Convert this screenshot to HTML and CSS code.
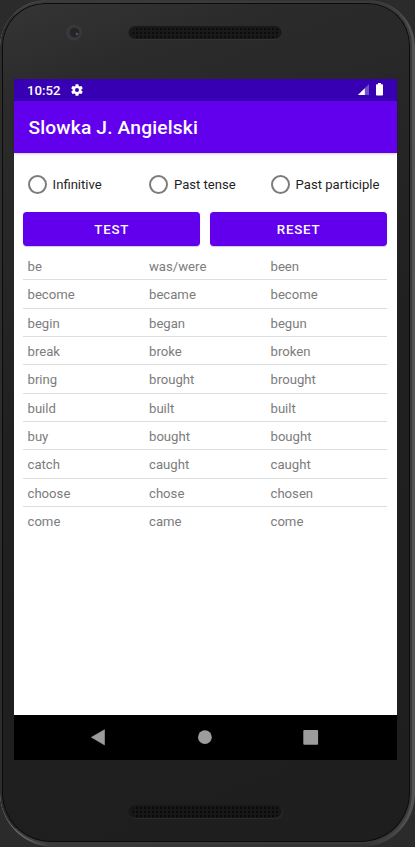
FILE: index.html
```html
<!DOCTYPE html>
<html lang="en">
<head>
<meta charset="utf-8">
<title>Slowka J. Angielski</title>
<link rel="stylesheet" href="styles.css">
</head>
<body>
<div class="phone">
<div class="face">
  <div class="bezel-top">
    <svg class="hardware" width="415" height="79" viewBox="0 0 415 79">
      <defs>
        <pattern id="mesh" x="131" y="27" width="4" height="4" patternUnits="userSpaceOnUse"><circle cx="2" cy="2" r="1" fill="#080808"/></pattern>
      </defs>
      <circle cx="74" cy="32.500" r="8" fill="#383838"/>
      <circle cx="74.500" cy="32.500" r="4.800" fill="#26242b"/>
      <circle cx="77" cy="34" r="1.200" fill="#684a58"/>
      <rect x="129" y="26.500" width="153.500" height="13" rx="6.500" fill="#3a3a3a"/>
      <rect x="128.500" y="26" width="153.500" height="13" rx="6.500" fill="#191919"/>
      <rect x="132" y="27" width="147" height="11" rx="5" fill="url(#mesh)"/>
    </svg>
  </div>
  <main class="screen">
    <div class="status">
      <span class="clock">10:52</span>
      <svg class="gear" width="14" height="14" viewBox="0 0 24 24"><path fill="#fff" fill-rule="evenodd" d="M19.430 12.980c.04-.32.07-.64.07-.98s-.03-.66-.07-.98l2.110-1.650c.19-.15.24-.42.12-.64l-2-3.460c-.12-.22-.39-.3-.61-.22l-2.490 1c-.52-.4-1.080-.73-1.690-.98l-.38-2.650A.488.488 0 0 0 14 2h-4c-.25 0-.46.18-.49.42l-.38 2.650c-.61.25-1.170.59-1.690.98l-2.490-1c-.23-.09-.49 0-.61.22l-2 3.460c-.13.22-.07.49.12.64l2.110 1.650c-.04.32-.07.65-.07.98s.03.66.07.98l-2.110 1.650c-.19.15-.24.42-.12.64l2 3.460c.12.22.39.3.61.22l2.490-1c.52.4 1.080.73 1.690.98l.38 2.650c.03.24.24.42.49.42h4c.25 0 .46-.18.49-.42l.38-2.650c.61-.25 1.170-.59 1.690-.98l2.490 1c.23.09.49 0 .61-.22l2-3.460c.12-.22.07-.49-.12-.64zM12 15.500a3.500 3.500 0 1 1 0-7 3.500 3.500 0 0 1 0 7z"/></svg>
      <svg class="signal" width="11" height="11" viewBox="0 0 11 11"><path fill="#7350c9" d="M0 11 11 0v11z"/><path fill="#fff" d="M0 11 6.800 4.200V11z"/></svg>
      <svg class="battery" width="7" height="13" viewBox="0 0 7 13"><path fill="#fff" d="M2 0h3v1.300h1.200q.8 0 .8.800v9.600q0 .8-.8.800H.8q-.8 0-.8-.8V2.100q0-.8.800-.8H2z"/></svg>
    </div>
    <header class="appbar">Slowka J. Angielski</header>
    <section class="content">
      <div class="radios">
        <label class="option"><i class="ring"></i>Infinitive</label>
        <label class="option"><i class="ring"></i>Past tense</label>
        <label class="option"><i class="ring"></i>Past participle</label>
      </div>
      <div class="actions"><button class="btn">TEST</button><button class="btn">RESET</button></div>
      <div class="verbs">
        <div class="row"><span>be</span><span>was/were</span><span>been</span></div>
        <div class="row"><span>become</span><span>became</span><span>become</span></div>
        <div class="row"><span>begin</span><span>began</span><span>begun</span></div>
        <div class="row"><span>break</span><span>broke</span><span>broken</span></div>
        <div class="row"><span>bring</span><span>brought</span><span>brought</span></div>
        <div class="row"><span>build</span><span>built</span><span>built</span></div>
        <div class="row"><span>buy</span><span>bought</span><span>bought</span></div>
        <div class="row"><span>catch</span><span>caught</span><span>caught</span></div>
        <div class="row"><span>choose</span><span>chose</span><span>chosen</span></div>
        <div class="row"><span>come</span><span>came</span><span>come</span></div>
      </div>
    </section>
    <nav class="navbar">
      <svg width="383" height="45" viewBox="0 0 383 45" fill="#9c9c9c">
        <path d="M77.400 22.300 90.500 14.700v15.200z" stroke="#9c9c9c" stroke-width=".6" stroke-linejoin="round"/>
        <circle cx="190.900" cy="22.200" r="6.900"/>
        <rect x="289.300" y="15" width="14.800" height="14.800" rx="1"/>
      </svg>
    </nav>
  </main>
  <div class="bezel-bottom">
    <svg class="hardware" width="415" height="87" viewBox="0 760 415 87">
      <defs>
        <pattern id="mesh2" x="131" y="806" width="4" height="4" patternUnits="userSpaceOnUse"><circle cx="2" cy="2" r="1" fill="#050505"/></pattern>
      </defs>
      <rect x="129" y="805.600" width="153.500" height="13" rx="6.500" fill="#363636"/>
      <rect x="128.500" y="805" width="153.500" height="13" rx="6.500" fill="#171717"/>
      <rect x="132" y="806" width="147" height="11" rx="5" fill="url(#mesh2)"/>
    </svg>
  </div>
</div>
<i class="side-key"></i>
</div>
</body>
</html>
```

FILE: styles.css
```css
* { box-sizing: border-box; }
body { margin: 0; background: #2b2b2b; font-family: Roboto, sans-serif; }
.phone {
  position: relative;
  width: 415px;
  height: 847px;
  padding: 1px 3px 2px 0;
  overflow: hidden;
  border-radius: 47px 47px 54px 54px;
  background: linear-gradient(90deg, #888 0, #3a3a3a 12%, #333 88%, #555 100%);
}
.face {
  height: 843px;
  border: 2px solid #3a3a3a;
  border-left-color: #2c2c2c;
  border-radius: 45px 44px 51px 51px;
  background: linear-gradient(160deg, #353535 0, #2b2b2b 10%, #202020 45%, #1e1e1e 100%);
  box-shadow: inset 0 0 0 1px #0b0b0b;
  padding-left: 12px;
}
.bezel-top { display: flow-root; height: 76px; }
.bezel-bottom { display: flow-root; height: 81px; }
.hardware { display: block; margin-left: -14px; margin-top: -3px; }
.bezel-bottom .hardware { margin-top: 0; }
.screen {
  display: flex;
  flex-direction: column;
  width: 383px;
  height: 681px;
  background: #fff;
}
.status {
  display: flex;
  align-items: center;
  height: 22px;
  padding: 0 14px 0 13px;
  background: #3700b3;
  color: #fff;
}
.clock { font-size: 13.200px; font-weight: 500; }
.gear { margin-left: 9.500px; }
.signal { margin-left: auto; margin-right: 7px; margin-top: -1px; }
.battery { margin-top: -1px; }
.appbar {
  height: 52px;
  padding-left: 14.500px;
  line-height: 54px;
  background: #6200ee;
  color: #fff;
  font-size: 19.200px;
  font-weight: 500;
  letter-spacing: .16px;
  box-shadow: 0 1px 2px #0003;
}
.content { flex: 1; padding: 8px 9px 0; }
.radios { display: grid; grid-template-columns: 121.400px 121.600px 1fr; height: 47px; }
.option {
  display: flex;
  align-items: center;
  gap: 5.600px;
  padding-left: 5px;
  color: #1f1f1f;
  font-size: 13.100px;
  white-space: nowrap;
}
.ring { flex: none; width: 19px; height: 19px; border: 2px solid #7c7c7c; border-radius: 50%; }
.actions { display: grid; grid-template-columns: 1fr 1fr; gap: 9.400px; height: 39px; padding-top: 4px; width: 364.300px; }
.btn {
  height: 34.300px;
  padding: 0;
  border: 0;
  border-radius: 3.700px;
  background: #6200ee;
  color: #fff;
  font: 500 13.300px/35px Roboto, sans-serif;
  letter-spacing: .8px;
  box-shadow: 0 .5px 1px #0003;
}
.verbs { width: 364.300px; padding-top: 5px; }
.row {
  display: grid;
  grid-template-columns: 121.500px 121.500px 1fr;
  height: 28.350px;
  line-height: 29px;
  padding-left: 4.500px;
  border-bottom: 1px solid #dedede;
  color: #7c7c7c;
  font-size: 13.150px;
}
.row:last-child { border: 0; }
.navbar { height: 45px; background: #000; }
.navbar svg { display: block; }
.side-key { position: absolute; right: 0; top: 275px; width: 1px; height: 215px; background: #555; }
```
